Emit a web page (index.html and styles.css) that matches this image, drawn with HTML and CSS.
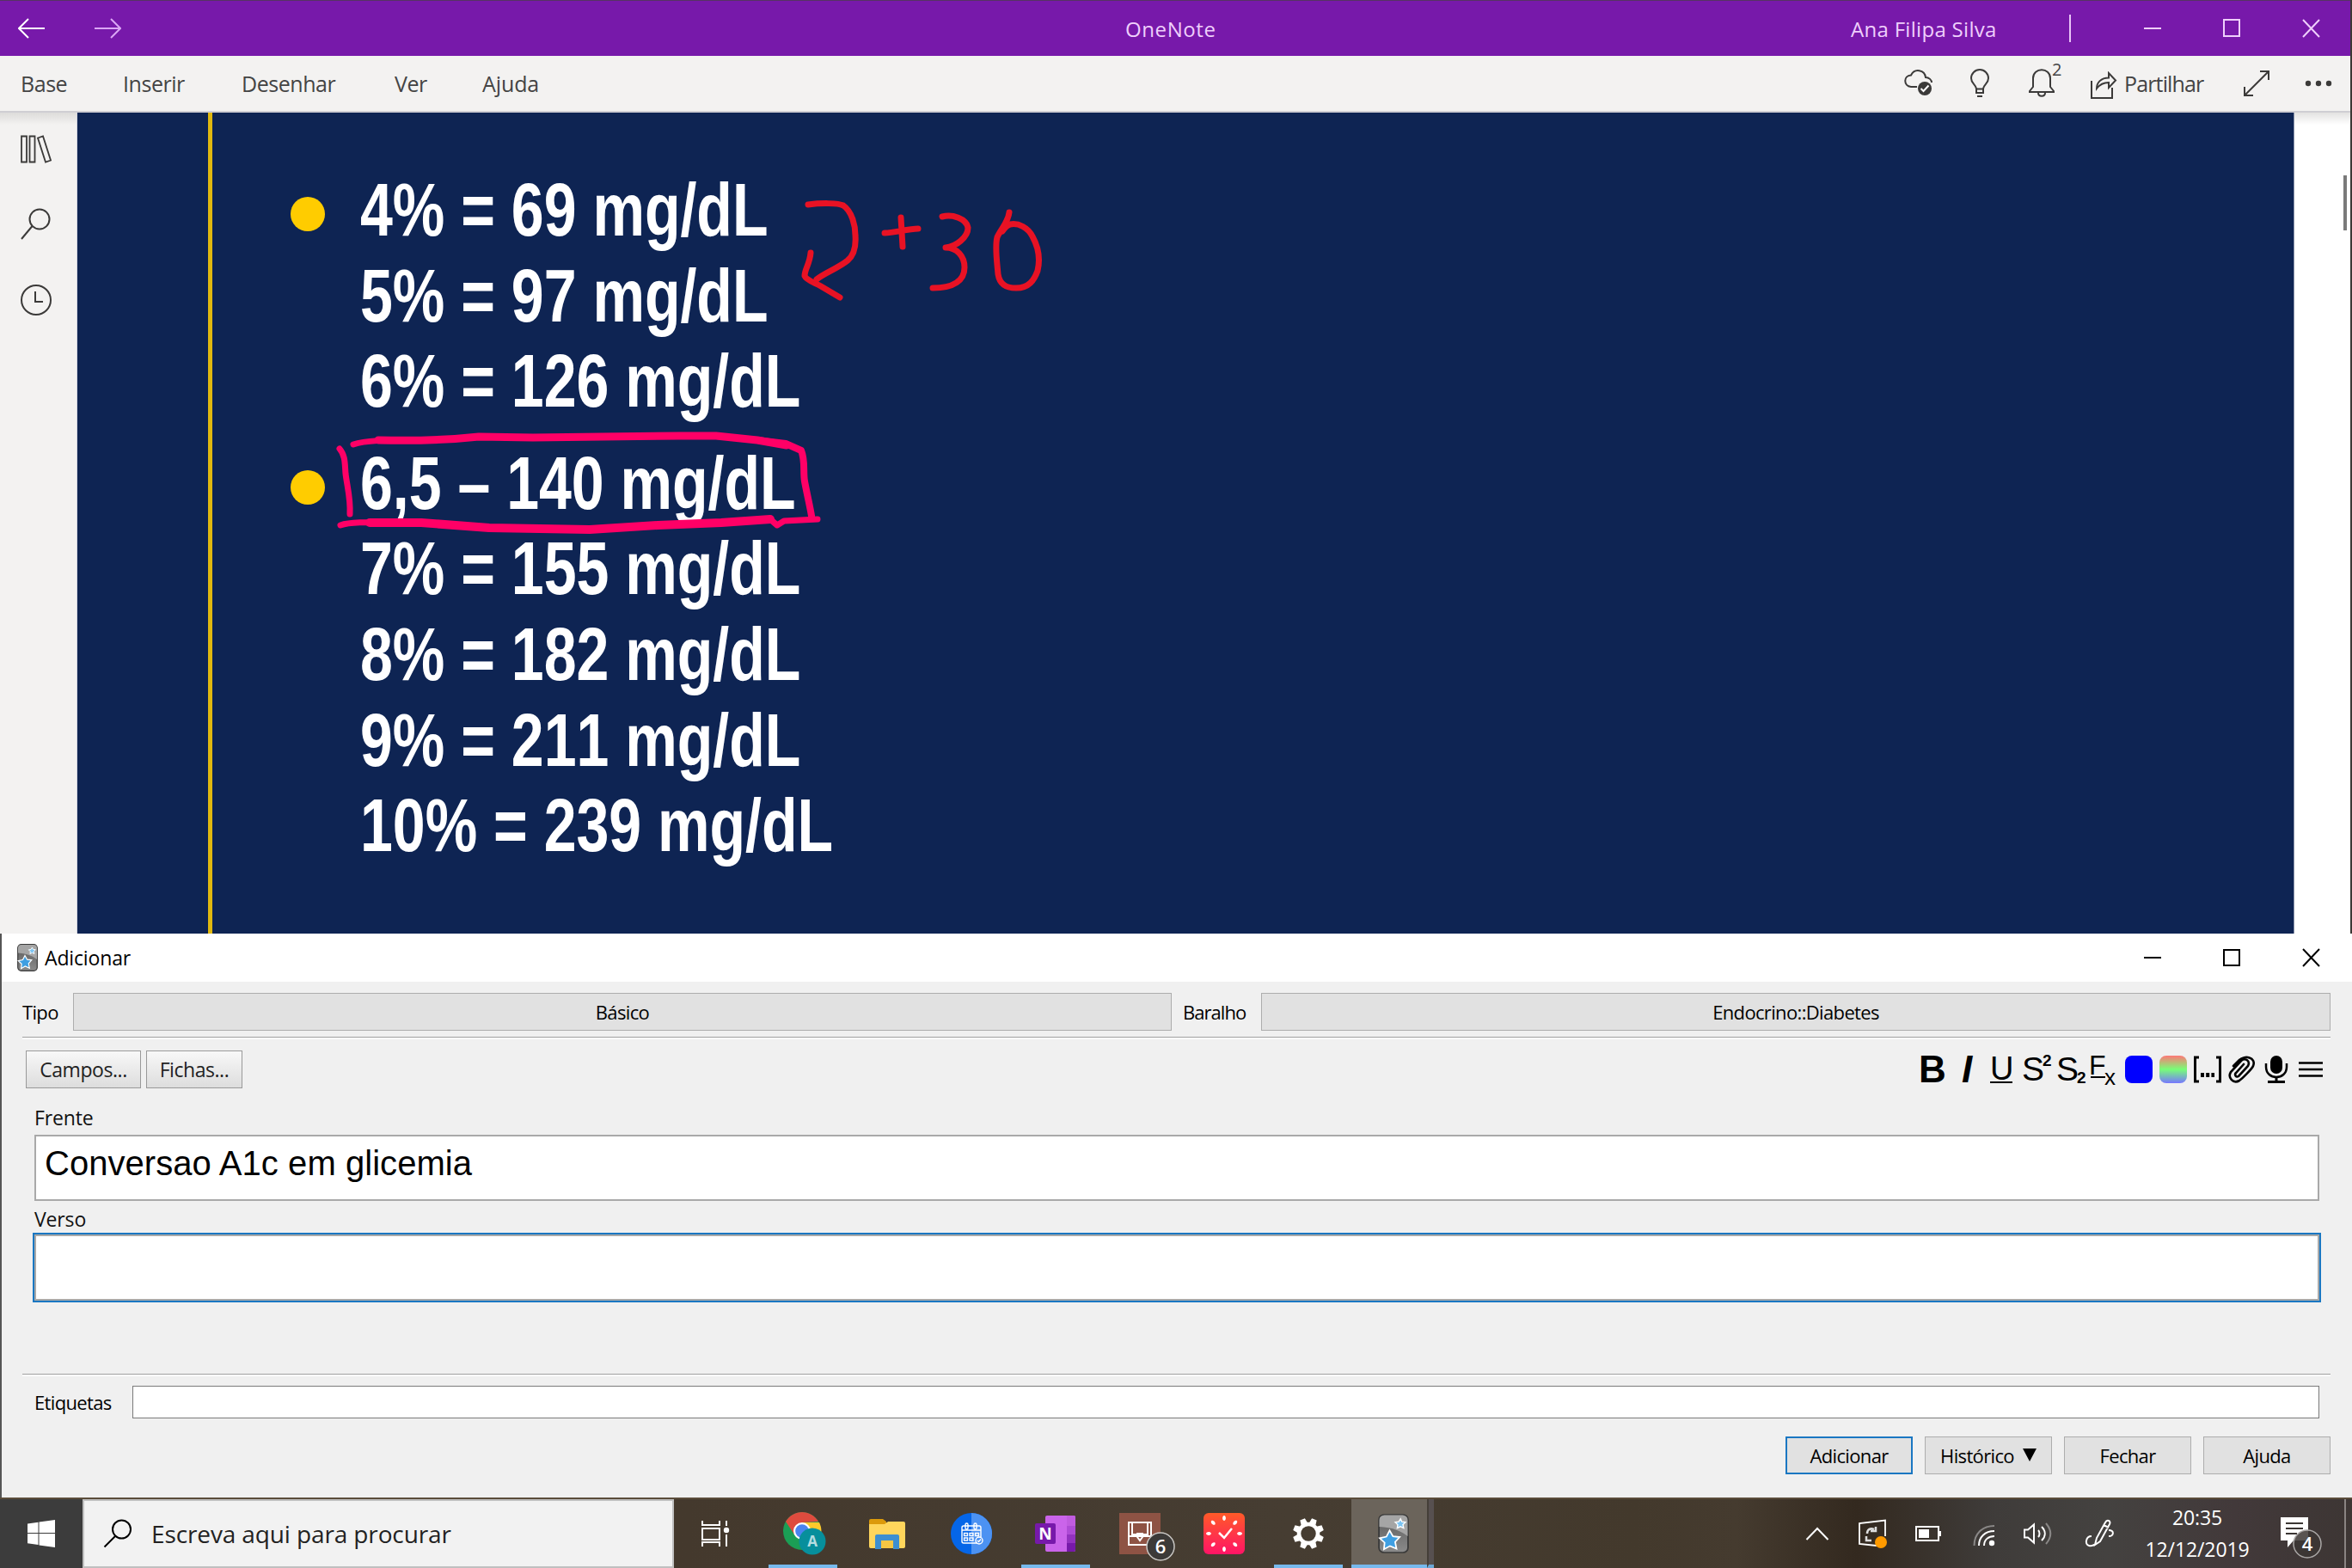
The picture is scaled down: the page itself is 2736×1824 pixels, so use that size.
FILE: index.html
```html
<!DOCTYPE html>
<html lang="pt">
<head>
<meta charset="utf-8">
<title>OneNote</title>
<link rel="stylesheet" href="styles.css">
</head>
<body>
<div class="desktop">

<header class="titlebar">
  <svg class="nav-back" width="32" height="24" viewBox="0 0 32 24" fill="none" stroke="#fff" stroke-width="2"><path d="M31 12H1M12 1L1 12l11 11"/></svg>
  <svg class="nav-fwd" width="32" height="24" viewBox="0 0 32 24" fill="none" stroke="#dba6f5" stroke-width="2"><path d="M1 12h30M20 1l11 11-11 11"/></svg>
  <span class="app-name">OneNote</span>
  <span class="user">Ana Filipa Silva</span>
  <i class="divider"></i>
  <svg class="winbtns" width="206" height="22" viewBox="0 0 206 22" fill="none" stroke="#efcffc" stroke-width="2"><path d="M0 11h20M93 1h18v19H93zM185 1l19 20M204 1l-19 20"/></svg>
</header>

<nav class="menubar">
  <span class="m-base">Base</span><span class="m-ins">Inserir</span><span class="m-des">Desenhar</span><span class="m-ver">Ver</span><span class="m-aju">Ajuda</span>
  <div class="tools">
    <svg width="34" height="32" viewBox="0 0 34 32" fill="none" stroke="#3b3a39" stroke-width="2"><path d="M15 20H8C-1 19-1 7 8 6.500C12-2 24 0 25 9c4 0 7 3 7 6"/><circle cx="24" cy="22" r="8" fill="#3b3a39" stroke="none"/><path d="M19.500 22l3 3 6-6.500" stroke="#fff"/></svg>
    <svg class="t-bulb" width="24" height="34" viewBox="0 0 24 34" fill="none" stroke="#3b3a39" stroke-width="2"><path d="M8 28v-5C7 18 2 17 2 11a10 10 0 0 1 20 0c0 6-5 7-6 12v5zM8 23.500h8M9 32h6"/></svg>
    <svg class="t-bell" width="30" height="34" viewBox="0 0 30 34" fill="none" stroke="#3b3a39" stroke-width="2"><path d="M1 27h28v-1l-4-5V11C25-2 5-2 5 11v10l-4 5zM11 28c0 5 8 5 8 0"/></svg>
    <span class="count">2</span>
    <svg class="t-share" width="32" height="32" viewBox="0 0 32 32" fill="none" stroke="#3b3a39" stroke-width="2"><path d="M2 11v20h24V19M8 20C8 13 13 7.500 22 7.500V2l8 8.500-8 8.500v-6C15 13 11 16 8 20z"/></svg>
    <span class="share">Partilhar</span>
    <svg class="t-exp" width="32" height="32" viewBox="0 0 32 32" fill="none" stroke="#3b3a39" stroke-width="2"><path d="M2 30L30 2M20 2h10v10M2 20v10h10"/></svg>
    <svg class="t-dots" width="32" height="8" viewBox="0 0 32 8" fill="#3b3a39"><circle cx="4" cy="4" r="3.200"/><circle cx="16" cy="4" r="3.200"/><circle cx="28" cy="4" r="3.200"/></svg>
  </div>
</nav>

<main class="workspace">
  <aside class="rail">
    <svg width="38" height="34" viewBox="0 0 38 34" fill="none" stroke="#3b3a39" stroke-width="1.800"><path d="M2 1.500h6v30H2zM11.500 1.500h6v30h-6zM21 3.500l6-2 9 28-6 2z"/></svg>
    <svg class="r-search" width="38" height="38" viewBox="0 0 38 38" fill="none" stroke="#3b3a39" stroke-width="2"><circle cx="23" cy="13" r="11.500"/><path d="M14.500 21L2 36"/></svg>
    <svg class="r-clock" width="38" height="38" viewBox="0 0 38 38" fill="none" stroke="#3b3a39" stroke-width="2"><circle cx="19" cy="19" r="17"/><path d="M18 9v12h9"/></svg>
  </aside>
  <article class="slide">
    <ul class="values">
      <li class="dot"><span>4% = 69 mg/dL</span></li>
      <li><span>5% = 97 mg/dL</span></li>
      <li><span>6% = 126 mg/dL</span></li>
      <li class="dot spaced"><span class="boxed">6,5 – 140 mg/dL</span></li>
      <li><span>7% = 155 mg/dL</span></li>
      <li><span>8% = 182 mg/dL</span></li>
      <li><span>9% = 211 mg/dL</span></li>
      <li><span>10% = 239 mg/dL</span></li>
    </ul>
    <svg class="ink" viewBox="380 220 860 420" width="860" height="420" fill="none" stroke-linecap="round" stroke-linejoin="round">
      <g stroke="#e81224" stroke-width="7">
        <path d="M940 238C955 236 975 236 981 239C991 246 995 262 995 274C996 288 993 297 986 303C975 312 958 318 950 325"/>
        <path d="M943 294C942 307 936 313 936 321C938 326 948 329 955 333L977 346"/>
        <path d="M1048 253L1050 287M1029 271C1040 271 1056 266 1068 266"/>
        <path d="M1096 252C1108 249 1124 254 1126 265C1126 276 1112 287 1100 288C1113 288 1122 298 1122 311C1122 326 1110 335 1085 335"/>
        <path d="M1174 247C1173 258 1164 267 1160 276C1157 287 1160 306 1161 319C1163 332 1172 335 1182 335C1197 335 1203 326 1207 315C1211 298 1206 284 1201 275C1196 265 1185 259 1175 261C1171 262 1168 266 1166 269"/>
      </g>
      <g stroke="#ff0066">
        <path stroke-width="7" d="M395 522C402 530 401 540 402 551C404 567 408 580 407 598"/>
        <path stroke-width="7" d="M411 517C425 512 450 512 480 512"/>
        <path stroke-width="9" d="M440 512C480 513 520 512 557 508L620 509L700 508L790 507L833 507L881 512L915 518"/>
        <path stroke-width="8" d="M881 512L914 516L932 524C937 536 934 548 936 560C939 576 942 588 944 600"/>
        <path stroke-width="7" d="M396 611C410 606 440 608 480 608"/>
        <path stroke-width="10" d="M430 608L490 608L569 614L686 616L765 611L839 608L896 604"/>
        <path stroke-width="7" d="M896 604L904 611L912 606L951 604"/>
      </g>
    </svg>
  </article>
  <div class="gutter"><i class="thumb"></i></div>
</main>

<section class="dialog">
  <div class="dlg-title">
    <svg width="24" height="32" viewBox="0 0 24 32"><use href="#anki"/></svg>
    <span class="dlg-name">Adicionar</span>
    <svg class="winbtns" width="206" height="22" viewBox="0 0 206 22" fill="none" stroke="#000" stroke-width="2"><path d="M0 11h20M93 2h18v18H93zM185 1l19 20M204 1l-19 20"/></svg>
  </div>
  <div class="picker">
    <span class="l-tipo">Tipo</span><div class="combo c1"><span class="basico">Básico</span></div>
    <span class="l-bar">Baralho</span><div class="combo c2"><span class="endo">Endocrino::Diabetes</span></div>
  </div>
  <hr>
  <div class="edit-tools">
    <div class="webbtn campos"><span>Campos...</span></div>
    <div class="webbtn fichas"><span>Fichas...</span></div>
    <div class="format">
      <b class="f-b">B</b><b class="f-i">I</b><span class="f-u">U</span>
      <span class="f-s">S<sup>2</sup></span><span class="f-s">S<sub>2</sub></span>
      <span class="f-x"><span class="f-line">F</span><sub>x</sub></span>
      <i class="swatch blue"></i><i class="swatch rainbow"></i>
      <svg width="32" height="32" viewBox="0 0 32 32" fill="none" stroke="#000" stroke-width="3"><path d="M6 2H1.500v28H6M26 2h4.500v28H26"/><path d="M8 22.500h16" stroke-width="5" stroke-dasharray="4 2.200"/></svg>
      <svg width="32" height="32" viewBox="0 0 32 32" fill="none" stroke="#000" stroke-width="2.600" stroke-linecap="round"><path d="M6 12L13 5C19-1 33 2 29 12C28 15 16 27 13 29C6 33-1 26 3 19L15 6C20 2 26 6 23 12L12 24C9 26 7 22 9 20L18 10"/></svg>
      <svg width="32" height="32" viewBox="0 0 32 32" fill="none" stroke="#000" stroke-width="2.500"><rect x="9" y="0" width="14" height="21" rx="7" fill="#000" stroke="none"/><path d="M4 9v4c0 16 24 16 24 0V9"/><path d="M16 24v6M6 30.500h20" stroke-width="3"/></svg>
      <svg width="32" height="32" viewBox="0 0 32 32" stroke="#000" stroke-width="2.600"><path d="M2 8.500h28M2 16h28M2 23.500h28"/></svg>
    </div>
  </div>
  <div class="fields">
    <label class="l-frente">Frente</label>
    <div class="field"><span class="front-text">Conversao A1c em glicemia</span></div>
    <label class="l-verso">Verso</label>
    <div class="field focus"></div>
  </div>
  <hr class="hr2">
  <div class="tags"><span class="l-tags">Etiquetas</span><div class="tag-input"></div></div>
  <div class="actions">
    <div class="btn primary"><span class="b-add">Adicionar</span></div>
    <div class="btn"><span class="b-his">Histórico</span><svg width="16" height="16" viewBox="0 0 16 16"><path d="M0 0h16L8 15z"/></svg></div>
    <div class="btn"><span class="b-fec">Fechar</span></div>
    <div class="btn"><span class="b-aju">Ajuda</span></div>
  </div>
</section>

<footer class="taskbar">
  <div class="start"><svg width="32" height="32" viewBox="0 0 32 32" fill="#fff"><path d="M0 4.500L12.500 2.800V15H0zM13.500 2.600L32 0v15H13.500zM0 16h12.500v13L0 27.300zM13.500 16H32v16l-18.500-2.500z"/></svg></div>
  <div class="search"><svg width="34" height="34" viewBox="0 0 34 34" fill="none" stroke="#000" stroke-width="2"><circle cx="21.500" cy="12" r="10.500"/><path d="M14 20L1.500 32.500"/></svg><span>Escreva aqui para procurar</span></div>
  <div class="apps">
    <div class="app w1"><svg width="34" height="34" viewBox="0 0 34 34" fill="none" stroke="#fff" stroke-width="2"><path d="M2 2v5h20V2M2 11h20v13H2zM2 32v-5h20v5M30 2v6M30 18v14"/><circle cx="30" cy="13" r="3.200" fill="#fff" stroke="none"/></svg></div>
    <div class="app on"><svg class="chrome" width="54" height="54" viewBox="0 0 54 54">
      <circle cx="24" cy="24" r="22" fill="#1b9e55"/><path d="M5 13A22 22 0 0 1 43 13L24 14 15 28z" fill="#de4b3e"/><path d="M24 14h20A22 22 0 0 1 26 46l8-20z" fill="#fdc92c"/>
      <circle cx="24" cy="24" r="10" fill="#fff"/><circle cx="24" cy="24" r="7.800" fill="#4a84f0"/><circle cx="36" cy="36" r="15.500" fill="#078f9c"/><text x="36" y="42" text-anchor="middle" class="avatar">A</text></svg></div>
    <div class="app"><svg width="44" height="36" viewBox="0 0 44 36"><path d="M1 3a2 2 0 0 1 2-2h14l4 3v5H1z" fill="#dc9a0b"/><path d="M1 7h18l4-3h18a2 2 0 0 1 2 2v27a2 2 0 0 1-2 2H3a2 2 0 0 1-2-2z" fill="#ffd65c"/><path d="M8 36V21a2 2 0 0 1 2-2h24a2 2 0 0 1 2 2v15h-7V26H15v10z" fill="#3d8fd0"/><path d="M15 26h14v9H15z" fill="#f5c744"/></svg></div>
    <div class="app"><svg width="48" height="48" viewBox="0 0 48 48" fill="none" stroke="#fff" stroke-width="1.400"><circle cx="24" cy="24" r="24" fill="#0566e8" stroke="none"/><path d="M24 0a24 24 0 0 1 0 48z" fill="#4c92f2" stroke="none"/><path d="M31 35H15a2 2 0 0 1-2-2V17a2 2 0 0 1 2-2h18a2 2 0 0 1 2 2v11M13 20h22"/><rect x="17" y="12" width="3" height="7" rx="1.500"/><rect x="27" y="12" width="3" height="7" rx="1.500"/><path d="M15.500 23.500h4v3h-4zM22 23.500h4v3h-4zM28.500 23.500h4v3h-4zM15.500 29h4v3h-4zM22 29h4v3h-4z"/><circle cx="33" cy="32" r="4"/><path d="M31 32l1.500 1.500L35 30.500"/></svg></div>
    <div class="app on"><svg width="48" height="44" viewBox="0 0 48 44"><rect x="12" y="1" width="35" height="42" rx="2" fill="#ca64ea"/><path d="M37 1h8a2 2 0 0 1 2 2v10H37z" fill="#c05cdf"/><path d="M37 13h10v10H37z" fill="#ae4bd5"/><path d="M37 23h10v10H37z" fill="#9332bf"/><path d="M37 33h10v8a2 2 0 0 1-2 2h-8z" fill="#7719aa"/><rect x="0" y="10" width="24" height="24" rx="2" fill="#7719aa"/><text x="12" y="29" text-anchor="middle" class="n-logo">N</text></svg></div>
    <div class="app"><svg width="66" height="58" viewBox="0 0 66 58" class="chest" fill="none" stroke="#fff" stroke-width="2"><rect x="0" y="2" width="48" height="48" fill="#8e5344" stroke="none"/><path d="M11 13h26v26H11zM15 13v14h18V13M11 29h26M21 26h6v4l-3 4-3-4z"/><circle cx="48" cy="41" r="16" fill="#3c3a38" stroke="#c9c7c4" stroke-width="1.500"/><text x="48" y="49" text-anchor="middle" class="badge">6</text></svg></div>
    <div class="app"><svg width="48" height="48" viewBox="0 0 48 48"><defs><linearGradient id="red" x1="0" y1="0" x2="0" y2="1"><stop offset="0" stop-color="#ff5a28"/><stop offset="1" stop-color="#ff1466"/></linearGradient><path id="drop" d="M24 9c-3-1-2-6 0-6s3 5 0 6z"/></defs><rect width="48" height="48" rx="6" fill="url(#red)"/><g fill="#fff"><use href="#drop"/><use href="#drop" transform="rotate(45 24 24)"/><use href="#drop" transform="rotate(90 24 24)"/><use href="#drop" transform="rotate(135 24 24)"/><use href="#drop" transform="rotate(180 24 24)"/><use href="#drop" transform="rotate(225 24 24)"/><use href="#drop" transform="rotate(270 24 24)"/><use href="#drop" transform="rotate(315 24 24)"/></g><path d="M18 23l6 6 9-11" fill="none" stroke="#fff" stroke-width="2.500"/></svg></div>
    <div class="app on"><svg width="36" height="36" viewBox="-18 -18 36 36"><defs><path id="tooth" d="M-4-12l1-6h6l1 6z"/></defs><circle r="11" fill="none" stroke="#fff" stroke-width="4.500"/><g fill="#fff"><use href="#tooth" transform="rotate(22.500)"/><use href="#tooth" transform="rotate(67.500)"/><use href="#tooth" transform="rotate(112.500)"/><use href="#tooth" transform="rotate(157.500)"/><use href="#tooth" transform="rotate(202.500)"/><use href="#tooth" transform="rotate(247.500)"/><use href="#tooth" transform="rotate(292.500)"/><use href="#tooth" transform="rotate(337.500)"/></g></svg></div>
    <div class="app active"><svg width="36" height="46" viewBox="0 0 24 32" preserveAspectRatio="none">
      <defs><linearGradient id="slate" x1="0" y1="0" x2="0" y2="1"><stop offset="0" stop-color="#5a5a5a"/><stop offset="1" stop-color="#8b8b8b"/></linearGradient>
      <g id="anki"><rect x=".7" y=".7" width="22.600" height="30.600" rx="4" fill="url(#slate)" stroke="#3a3a3a" stroke-width="1.200"/><path d="M1 10.500V5a4 4 0 0 1 4-4h14a4 4 0 0 1 4 4v13Q14 11 1 10.500z" fill="#a5a5a5"/><path d="M9 13.500l2.600 4.700 5.200.6-3.500 4 1 5.400-5-2.200-4.700 2.700.5-5.400-3.800-3.600 5.200-1.200z" fill="#3f9fe2" stroke="#fff" stroke-width="1.200"/><path d="M17.500 4l1 2.400 2.800.3-2 2 .6 2.800-2.500-1.200-2.500 1.300.4-2.800-2-2 2.800-.4z" fill="#7cc4f2" stroke="#fff" stroke-width=".9"/></g></defs><use href="#anki"/></svg></div>
    <i class="stack"></i>
  </div>
  <div class="tray">
    <svg width="28" height="16" viewBox="0 0 28 16" fill="none" stroke="#fff" stroke-width="2"><path d="M1.500 15L14 2l12.500 13"/></svg>
    <svg class="y-upd" width="34" height="34" viewBox="0 0 34 34" fill="none" stroke="#fff" stroke-width="1.800"><path d="M22 31L2 29V5l30-3.500V20"/><path d="M11 17c0-5 4-7 8-5M21 9v5h-6M10 20v5h6" stroke="#ddd" stroke-width="2.500"/><circle cx="27" cy="27" r="7" fill="#ff9a00" stroke="none"/></svg>
    <svg class="y-bat" width="32" height="20" viewBox="0 0 32 20" fill="none" stroke="#fff" stroke-width="2"><path d="M2 2h26v16H2z"/><path d="M5 5h12v10H5zM29 7h2v6h-2z" fill="#fff" stroke="none"/></svg>
    <svg class="y-wifi" width="26" height="26" viewBox="0 0 26 26" fill="none" stroke="#fff" stroke-width="2"><path d="M1.500 25C1.500 11 11 2 25 2" stroke="#8a8887"/><path d="M7 25C7 15 14 8 25 8M13 25c0-7 5-11 12-11"/><circle cx="22" cy="22" r="3.200" fill="#fff" stroke="none"/></svg>
    <svg class="y-vol" width="34" height="26" viewBox="0 0 34 26" fill="none" stroke="#fff" stroke-width="2"><path d="M2 8.500v9h4l7 6V2.500l-7 6zM18 9c2 2 2 6 0 8M22 5c5 5 5 11 0 16"/><path d="M27 1c7 8 7 16 0 24" stroke="#8a8887"/></svg>
    <svg class="y-pen" width="36" height="34" viewBox="0 0 36 34" fill="none" stroke="#fff" stroke-width="2"><path d="M12 30l2-8L24 4c2-4 7-2 5 2L18 26zM22 7l6 3M8 20c-7 0-8 10-3 11 4 1 5-1 8-2M28 13c7 0 6 7 0 7"/></svg>
    <div class="clock"><span class="time">20:35</span><span class="date">12/12/2019</span></div>
    <svg class="y-note" width="52" height="52" viewBox="0 0 52 52"><path d="M1 1h32v27H16l-7 8v-8H1z" fill="#fff"/><path d="M7 8h20M7 14h20M7 20h13" stroke="#3b3634" stroke-width="2"/><circle cx="32" cy="32" r="16" fill="#3c3634" fill-opacity=".85" stroke="#aaa7a6" stroke-width="1.500"/><text x="32" y="40" text-anchor="middle" class="badge">4</text></svg>
    <i class="peek"></i>
  </div>
</footer>
</div>
</body>
</html>
```
FILE: styles.css
```css
* { box-sizing: border-box; }
body { margin: 0; font-family: "Open Sans", "Noto Sans", sans-serif; }
svg { display: block; flex: none; }
span, label { white-space: nowrap; }
.desktop { width: 2736px; height: 1824px; display: flex; flex-direction: column; overflow: hidden; background: #3c3835; }

.titlebar { height: 65px; flex: none; display: flex; align-items: center; background: #7719aa; border-top: 1px solid #563362; color: #efcffc; font-size: 24px; margin-right: 2px; }
.nav-back { margin-left: 21px; }
.nav-fwd { margin-left: 56px; }
.app-name { margin-left: 1168px; width: 105px; letter-spacing: .6px; }
.user { margin-left: 739px; width: 174px; letter-spacing: .3px; }
.divider { width: 2px; height: 32px; background: #e9c3f8; margin-left: 80px; }
.winbtns { margin-left: 85px; }

.menubar { height: 66px; flex: none; display: flex; align-items: center; background: #f3f2f1; border-bottom: 2px solid #cfced3; color: #444; font-size: 25px; letter-spacing: -.45px; margin-right: 2px; }
.m-base { margin-left: 24px; width: 119px; }
.m-ins { width: 138px; }
.m-des { width: 178px; }
.m-ver { width: 102px; }
.m-aju { letter-spacing: -.1px; }
.tools { display: flex; align-items: center; margin-left: auto; }
.t-bulb { margin-left: 42px; }
.t-bell { margin-left: 45px; }
.count { font-size: 20px; line-height: 20px; width: 12px; margin: 0 0 32px -3px; }
.t-share { margin: 4px 0 0 32px; }
.share { margin-left: 8px; width: 98px; letter-spacing: -.85px; }
.t-exp { margin-left: 40px; }
.t-dots { margin: 0 21px 0 40px; }

.workspace { height: 955px; flex: none; display: flex; background: linear-gradient(#e3e2e1, #fff 14px); margin-right: 2px; }
.rail { width: 90px; background: linear-gradient(#dddcda, #f3f2f1 14px); border-right: 1px solid #d4d6e0; padding: 26px 0 0 23px; }
.r-search { margin-top: 51px; }
.r-clock { margin-top: 50px; }
.slide { width: 2579px; flex: none; background: #0e2453; position: relative; padding-left: 152px; border-right: 1px solid #8791a9; }
.values { margin: 0; padding: 63px 0 0 97px; height: 100%; list-style: none; border-left: 5px solid #e0b810; font: bold 88px/99.600px "Liberation Sans", Arial, sans-serif; font-kerning: none; color: #fff; }
.values li { height: 99.600px; position: relative; }
.values li span { display: block; width: max-content; margin-left: 75px; transform: scaleX(.773); transform-origin: 0 0; }
.values li.spaced { margin-top: 19px; }
.values li.dot::before { content: ""; position: absolute; left: -6px; top: 35px; width: 40px; height: 40px; border-radius: 50%; background: #fc0; }
.ink { position: absolute; left: 290px; top: 89px; }
.gutter { flex: 1; padding: 73px 4px 0 0; }
.thumb { display: block; width: 4px; height: 64px; background: #7a7a7a; margin-left: auto; }

.dialog { height: 656px; flex: none; background: #f0f0f0; border-left: 2px solid #555; display: flex; flex-direction: column; color: #000; font-size: 22px; letter-spacing: -.65px; }
.dlg-title { height: 56px; flex: none; background: #fff; display: flex; align-items: center; padding: 0 37px 0 18px; }
.dlg-name { margin-left: 8px; font-size: 23px; letter-spacing: -.15px; }
.dlg-title .winbtns { margin-left: auto; margin-right: -1px; }
.picker { display: flex; align-items: center; margin: 13px 25px 0 24px; height: 44px; flex: none; }
.l-tipo { width: 59px; }
.l-bar { width: 91px; margin-left: 13px; letter-spacing: -.95px; }
.combo { height: 44px; background: #e1e1e1; border: 1px solid #adadad; display: flex; align-items: center; justify-content: center; }
.c1 { width: 1278px; }
.c2 { flex: 1; }
hr { border: 0; height: 3px; flex: none; background: #fff; border-top: 1px solid #a0a0a0; margin: 7px 25px 0 24px; }
.edit-tools { display: flex; align-items: center; margin: 13px 31px 0 28px; height: 44px; flex: none; }
.webbtn { height: 44px; border: 1px solid #999; background: linear-gradient(#f8f8f8, #ddd); display: flex; align-items: center; justify-content: center; font-size: 23px; letter-spacing: -.45px; color: #222; }
.campos { width: 134px; }
.fichas { width: 112px; margin-left: 6px; }
.format { margin-left: auto; display: grid; grid-template-columns: repeat(12, 32px); gap: 8px; height: 32px; font-family: "Liberation Sans", Arial, sans-serif; letter-spacing: 0; margin-right: 1px; line-height: 32px; text-align: center; }
.f-b { font-size: 44px; }
.f-i { font-size: 44px; font-style: italic; }
.f-u { font-size: 38px; border-bottom: 2px solid #000; line-height: 30px; margin: 0 3px; }
.f-s, .f-x { font-size: 39px; text-align: left; letter-spacing: -2px; display: flex; }
.f-s sup, .f-s sub { font-size: 19px; font-weight: bold; line-height: 12px; }
.f-s sup { align-self: flex-start; }
.f-s sub, .f-x sub { align-self: flex-end; }
.f-x { font-size: 32px; letter-spacing: 0; }
.f-line { width: 17px; height: 26px; line-height: 23px; border-bottom: 2px solid #000; text-indent: -2px; }
.f-x sub { font-size: 26px; line-height: 14px; margin-left: -1px; }
.swatch { border-radius: 8px; }
.blue { background: #00f; }
.rainbow { background: linear-gradient(#f77, #7f7 50%, #77f); }
.fields { display: flex; flex-direction: column; padding: 17px 36px 0 36px; font-size: 23px; letter-spacing: -.15px; color: #111; }
.fields label { line-height: 34px; padding-left: 2px; }
.field { margin: 3px 2px 0; height: 77px; border: 2px solid #a9a9a9; background: #fff; display: flex; align-items: center; padding-left: 10px; font: 40px "Liberation Sans", Arial, sans-serif; letter-spacing: .05px; color: #000; }
.front-text { margin-top: -10px; }
.l-verso { margin-top: 4px; }
.focus { margin-top: 1px; outline: 2px solid #1a77c2; }
.hr2 { margin-top: 85px; }
.tags { display: flex; align-items: center; margin: 11px 38px 0; height: 38px; flex: none; }
.l-tags { width: 114px; }
.tag-input { flex: 1; height: 38px; background: #fff; border: 1px solid #7a7a7a; }
.actions { display: flex; justify-content: flex-end; gap: 14px; margin: 21px 25px 0 0; }
.btn { width: 148px; height: 44px; background: #e1e1e1; border: 1px solid #adadad; display: flex; align-items: center; justify-content: center; gap: 10px; }
.primary { border: 2px solid #1a77c2; }

.taskbar { height: 82px; flex: none; display: flex; align-items: stretch; border-top: 2px solid #5b4c3a; background: linear-gradient(90deg, #3c3c3c 0 90px, #44392d 790px, #463d32 1500px, #43392c 1900px, #453b2f 2020px, #33291f 2160px, #3f3c3a 2320px, #444240 2450px, #42393a 2600px, #3d3634); color: #fff; }
.start { width: 96px; display: flex; align-items: center; justify-content: center; }
.search { width: 688px; background: #f2f2f2; border: 2px solid #c0c0c0; display: flex; align-items: center; padding-left: 22px; font-size: 28px; letter-spacing: -.12px; color: #222; }
.search span { margin-left: 22px; }
.apps { display: flex; padding-left: 8px; }
.app { width: 80px; margin-right: 18px; display: flex; align-items: center; justify-content: center; }
.app.w1 { margin-right: 22px; }
.on { border-bottom: 4px solid #76b9ed; padding-top: 4px; }
.chrome { margin-left: 4px; }
.chest { margin-left: 18px; margin-top: 6px; }
.app.active { width: 88px; margin: 0 0 0 -8px; background: #6b645b; border-bottom: 4px solid #76b9ed; padding: 4px 0 0 10px; }
.stack { width: 8px; background: #575050; border-left: 2px solid #453f39; border-bottom: 4px solid #6ba7d6; }
.avatar { font: bold 17px "Open Sans", sans-serif; fill: #b5dde0; }
.n-logo { font: bold 19px "Open Sans", sans-serif; fill: #fff; }
.badge { font: 600 22px "Open Sans", sans-serif; fill: #fff; stroke: none; }
.tray { margin-left: auto; display: flex; align-items: center; }
.y-upd { margin-left: 33px; }
.y-bat { margin-left: 32px; }
.y-wifi { margin: 4px 0 0 36px; }
.y-vol { margin-left: 32px; }
.y-pen { margin-left: 38px; }
.clock { width: 124px; margin-left: 33px; display: flex; flex-direction: column; align-items: center; font-size: 23px; line-height: 37px; letter-spacing: -.1px; }
.y-note { margin: 12px 0 0 34px; }
.peek { width: 2px; align-self: stretch; background: #8a8482; margin: 0 7px 0 23px; }
```
